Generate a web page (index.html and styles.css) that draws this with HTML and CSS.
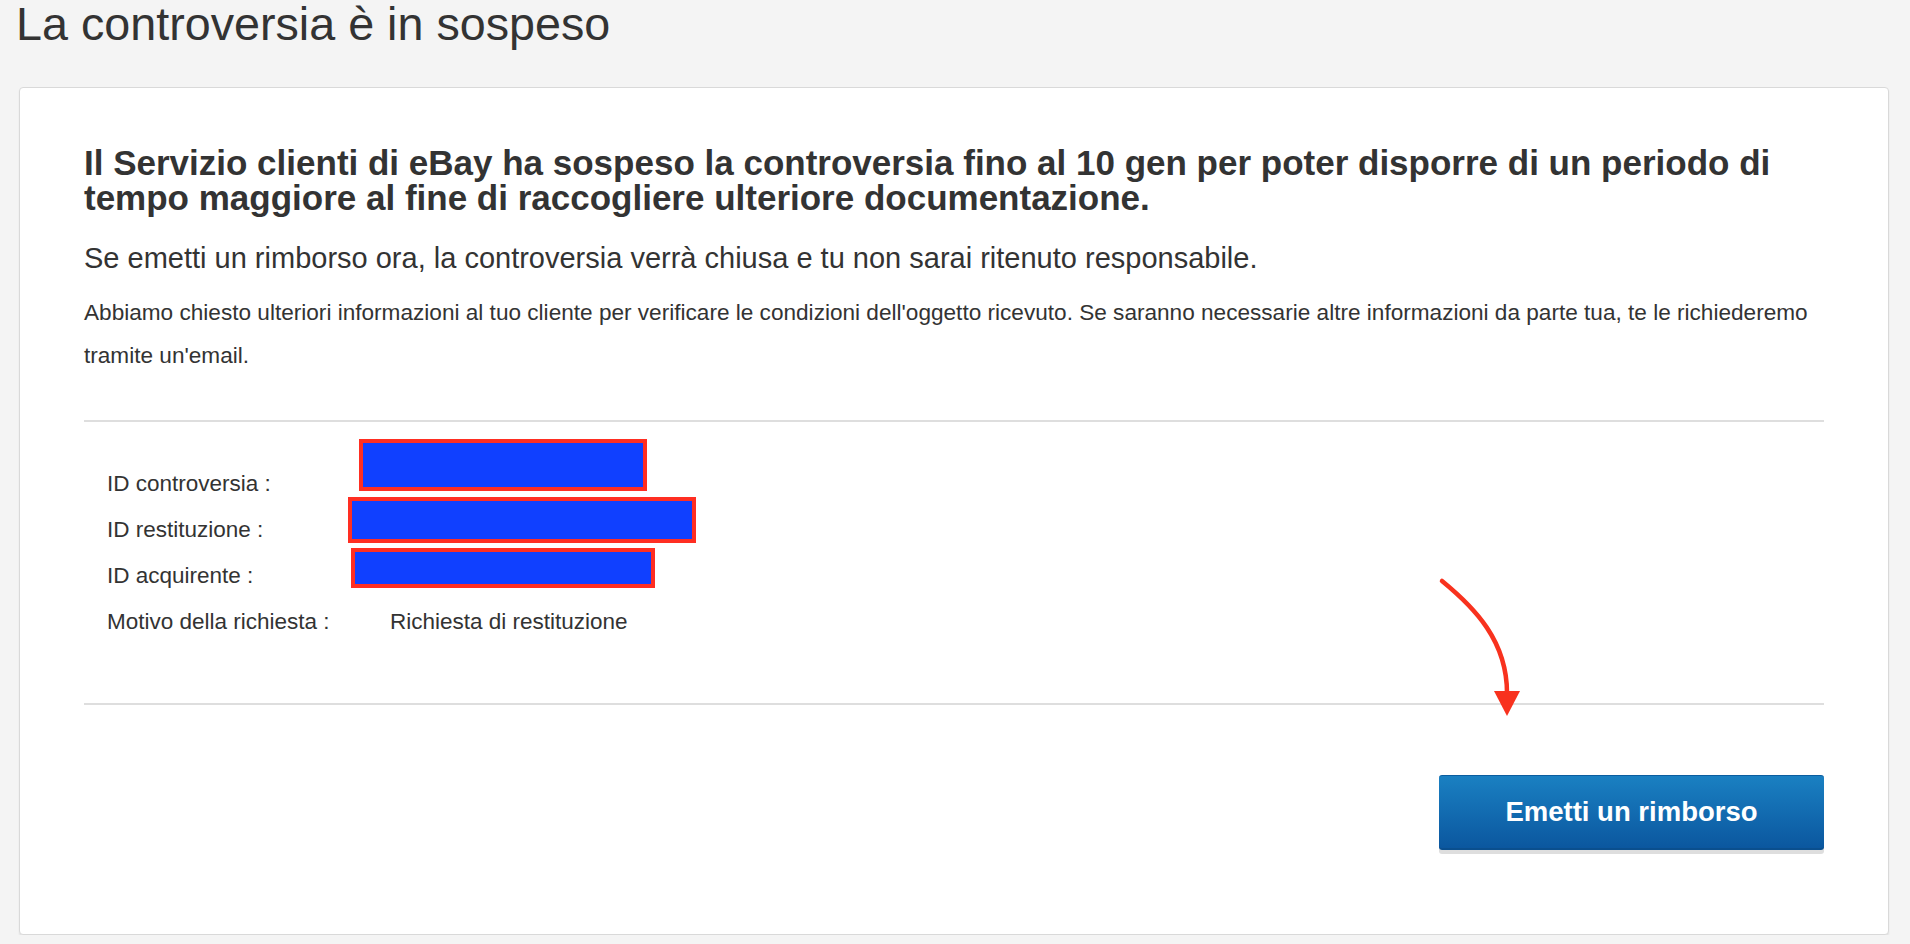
FILE: index.html
```html
<!DOCTYPE html>
<html lang="it">
<head>
  <meta charset="UTF-8" />
  <meta name="viewport" content="width=device-width, initial-scale=1" />
  <title>La controversia è in sospeso</title>
  <link rel="stylesheet" href="styles.css">
</head>
<body>

  <h1 class="page-title">La controversia è in sospeso</h1>

  <div class="card">
    <h2 class="status-title">Il Servizio clienti di eBay ha sospeso la controversia fino al 10 gen per poter disporre di un periodo di tempo maggiore al fine di raccogliere ulteriore documentazione.</h2>
    <p class="status-lead">Se emetti un rimborso ora, la controversia verrà chiusa e tu non sarai ritenuto responsabile.</p>
    <p class="status-note">Abbiamo chiesto ulteriori informazioni al tuo cliente per verificare le condizioni dell'oggetto ricevuto. Se saranno necessarie altre informazioni da parte tua, te le richiederemo tramite un'email.</p>

    <div class="details">
      <div class="detail-row">
        <span class="detail-label">ID controversia :</span>
        <span class="detail-value"></span>
      </div>
      <div class="detail-row">
        <span class="detail-label">ID restituzione :</span>
        <span class="detail-value"></span>
      </div>
      <div class="detail-row">
        <span class="detail-label">ID acquirente :</span>
        <span class="detail-value"></span>
      </div>
      <div class="detail-row">
        <span class="detail-label">Motivo della richiesta :</span>
        <span class="detail-value">Richiesta di restituzione</span>
      </div>

      <!-- redacted ids -->
      <span class="redact redact-1"></span>
      <span class="redact redact-2"></span>
      <span class="redact redact-3"></span>
    </div>

    <div class="actions">
      <button class="refund-btn">Emetti un rimborso</button>
    </div>

    <svg class="pointer" width="100" height="150" viewBox="0 0 100 150">
      <path d="M12 10 C 45 37, 77 70, 77 122" fill="none" stroke="#f8321e" stroke-width="4.5" stroke-linecap="round" />
      <polygon points="64,120 90,120 77,145" fill="#f8321e" />
    </svg>
  </div>

</body>
</html>
```

FILE: styles.css
```css
body {
  margin: 0;
  padding: 0 21px 0 19px;
  background-color: #f4f4f4;
  font-family: "Liberation Sans", Arial, sans-serif;
  color: #333;
}
.page-title {
  margin: 0 0 39px -3px;
  font-size: 46.7px;
  line-height: 48px;
  font-weight: normal;
  color: #333;
}
.card {
  position: relative;
  background: #fff;
  border: 1px solid #d9d9d9;
  border-radius: 4px;
  box-shadow: 0 2px 2px rgba(0, 0, 0, 0.07);
  padding: 57px 64px 84px;
}
.status-title {
  margin: 0;
  font-size: 35px;
  line-height: 35px;
  font-weight: bold;
}
.status-lead {
  margin: 27px 0 0;
  font-size: 29px;
  line-height: 32px;
}
.status-note {
  margin: 17px 0 0;
  font-size: 22.6px;
  line-height: 43px;
}
.details {
  position: relative;
  margin-top: 43px;
  border-top: 2px solid #dedede;
  border-bottom: 2px solid #dedede;
  padding: 39px 0 58px 23px;
}
.detail-row {
  display: flex;
  height: 46px;
  align-items: center;
  font-size: 22.5px;
}
.detail-label {
  width: 283px;
}
.redact {
  position: absolute;
  box-sizing: border-box;
  background: #1040ff;
  border: 4px solid #ff2e22;
}
.redact-1 {
  left: 275px;
  top: 17px;
  width: 288px;
  height: 52px;
}
.redact-2 {
  left: 264px;
  top: 75px;
  width: 348px;
  height: 46px;
}
.redact-3 {
  left: 267px;
  top: 126px;
  width: 304px;
  height: 40px;
}
.actions {
  display: flex;
  justify-content: flex-end;
  padding-top: 70px;
}
.refund-btn {
  width: 385px;
  height: 75px;
  font-family: inherit;
  font-size: 27.5px;
  font-weight: bold;
  color: #fff;
  background: linear-gradient(#1a80c2, #0b579f);
  border: none;
  border-top: 1px solid #0b5d9f;
  border-bottom: 2px solid #0a4f8e;
  border-radius: 3px;
  box-shadow: 0 4px 0 #dedede;
  cursor: pointer;
}
.pointer {
  position: absolute;
  left: 1410px;
  top: 483px;
}
```
